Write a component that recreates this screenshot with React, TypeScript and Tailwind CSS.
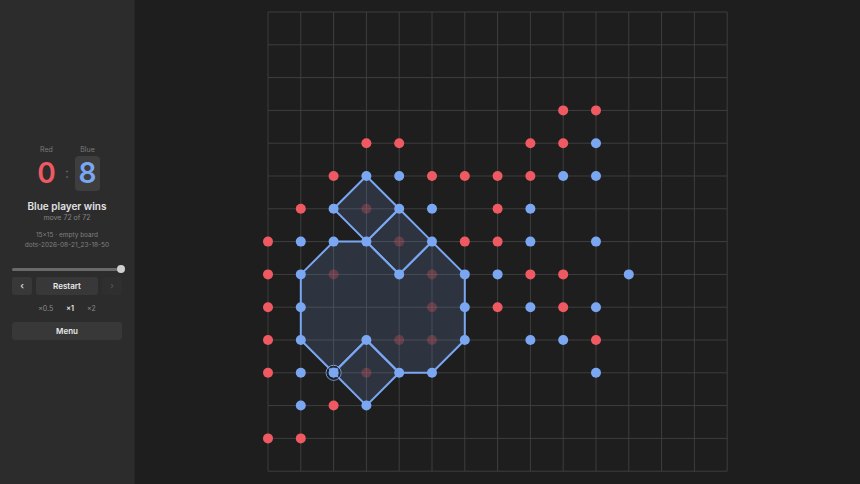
import React from 'react';

const N = 15;
const S = 32.8;
const PAD = 6;

// board state: r = red, b = blue, x = captured red, . = empty
const ROWS = [
  '...............',
  '...............',
  '...............',
  '.........rr....',
  '...rr...rrb....',
  '..rbbrrrrbb....',
  '.rbxbb.rb......',
  'rbbbxbrrb.b....',
  'rbx.bxbbrr.b...',
  'rb...xbrbrb....',
  'rb.bxxb.bbr....',
  'rbbxbb....b....',
  '.brb...........',
  'rr.............',
  '...............',
];

const POLYS: [number, number][][] = [
  [[1, 8], [2, 7], [3, 7], [4, 8], [5, 7], [6, 8], [6, 9], [6, 10], [5, 11], [4, 11], [3, 10], [2, 11], [1, 10], [1, 9]],
  [[3, 5], [4, 6], [3, 7], [2, 6]],
  [[4, 6], [5, 7], [4, 8], [3, 7]],
  [[3, 10], [4, 11], [3, 12], [2, 11]],
];

const LAST = [2, 11];

const RED = '#ef5a62';
const BLUE = '#7ba7f2';

const px = (i: number) => PAD + i * S;

const Board = () => {
  const size = PAD * 2 + (N - 1) * S;
  const lines = [];
  for (let i = 0; i < N; i++) {
    lines.push(<line key={'v' + i} x1={px(i)} y1={px(0)} x2={px(i)} y2={px(N - 1)} stroke="#3e3e3e" strokeWidth={1} />);
    lines.push(<line key={'h' + i} x1={px(0)} y1={px(i)} x2={px(N - 1)} y2={px(i)} stroke="#3e3e3e" strokeWidth={1} />);
  }
  const dots = [];
  ROWS.forEach((row, y) => {
    row.split('').forEach((c, x) => {
      if (c === '.') return;
      const fill = c === 'b' ? BLUE : RED;
      const opacity = c === 'x' ? 0.28 : 1;
      dots.push(<circle key={x + '-' + y} cx={px(x)} cy={px(y)} r={5} fill={fill} opacity={opacity} />);
    });
  });
  return (
    <svg width={size} height={size} viewBox={`0 0 ${size} ${size}`}>
      {lines}
      {POLYS.map((p, i) => (
        <polygon
          key={i}
          points={p.map(([x, y]) => `${px(x)},${px(y)}`).join(' ')}
          fill="rgba(123,167,242,0.16)"
          stroke={BLUE}
          strokeWidth={2}
          strokeLinejoin="round"
        />
      ))}
      {dots}
      <circle cx={px(LAST[0])} cy={px(LAST[1])} r={7.5} fill="none" stroke={BLUE} strokeWidth={1} />
      <circle cx={px(LAST[0])} cy={px(LAST[1])} r={6.5} fill="none" stroke="#1f1f1f" strokeWidth={1} />
    </svg>
  );
};

export default function App() {
  return (
    <div className="flex h-[484px] w-[860px] overflow-hidden bg-[#1e1e1e]" style={{ fontFamily: 'Inter, "Noto Sans", sans-serif' }}>
      {/* Sidebar */}
      <aside className="flex w-[135px] shrink-0 flex-col justify-center border-r border-[#262626] bg-[#2c2c2c] px-3">
        {/* Score */}
        <div className="flex items-end justify-center gap-[6px]">
          <div className="flex w-[25px] flex-col items-center">
            <span className="text-[7px] leading-[10px] text-[#7a7a7a]">Red</span>
            <div className="mt-[1px] flex h-[35px] items-center justify-center text-[28px] font-semibold leading-none text-[#ef5a62]">0</div>
          </div>
          <div className="flex h-[35px] items-center text-[14px] leading-none text-[#6a6a6a]">:</div>
          <div className="flex w-[25px] flex-col items-center">
            <span className="text-[7px] leading-[10px] text-[#7a7a7a]">Blue</span>
            <div className="mt-[1px] flex h-[35px] w-[25px] items-center justify-center rounded-[4px] bg-[#3e3e3e] text-[28px] font-semibold leading-none text-[#7ba7f2]">8</div>
          </div>
        </div>

        {/* Status */}
        <div className="mt-[8px] text-center text-[10px] font-semibold leading-[14px] text-[#e2e2e2]">Blue player wins</div>
        <div className="text-center text-[7px] leading-[10px] text-[#858585]">move 72 of 72</div>

        <div className="mt-[7px] text-center text-[6.5px] leading-[10px] text-[#808080]">
          <div>15×15 · empty board</div>
          <div>dots-2026-08-21_23-18-50</div>
        </div>

        {/* Timeline slider */}
        <div className="relative mt-[18px] h-[3px] rounded-full bg-[#6a6a6a]">
          <div className="absolute right-[-3px] top-[-2.5px] h-[8px] w-[8px] rounded-full bg-[#d0d0d0]" />
        </div>

        {/* Controls */}
        <div className="mt-[6px] flex h-[18px] gap-[4px]">
          <button className="flex w-[20px] items-center justify-center rounded-[3px] bg-[#383838] text-[9px] font-semibold text-[#dcdcdc]">‹</button>
          <button className="flex flex-1 items-center justify-center rounded-[3px] bg-[#383838] text-[8px] font-semibold text-[#e8e8e8]">Restart</button>
          <button className="flex w-[20px] items-center justify-center rounded-[3px] bg-[#2f2f2f] text-[9px] text-[#5c5c5c]">›</button>
        </div>

        <div className="mt-[8px] flex items-center justify-center gap-[13px] text-[7px] leading-[12px]">
          <span className="text-[#8a8a8a]">×0.5</span>
          <span className="font-semibold text-[#f0f0f0]">×1</span>
          <span className="text-[#8a8a8a]">×2</span>
        </div>

        <button className="mt-[7px] flex h-[18px] items-center justify-center rounded-[3px] bg-[#383838] text-[8px] font-semibold text-[#e8e8e8]">Menu</button>
      </aside>

      {/* Board */}
      <main className="flex flex-1 items-center justify-center">
        <Board />
      </main>
    </div>
  );
}
